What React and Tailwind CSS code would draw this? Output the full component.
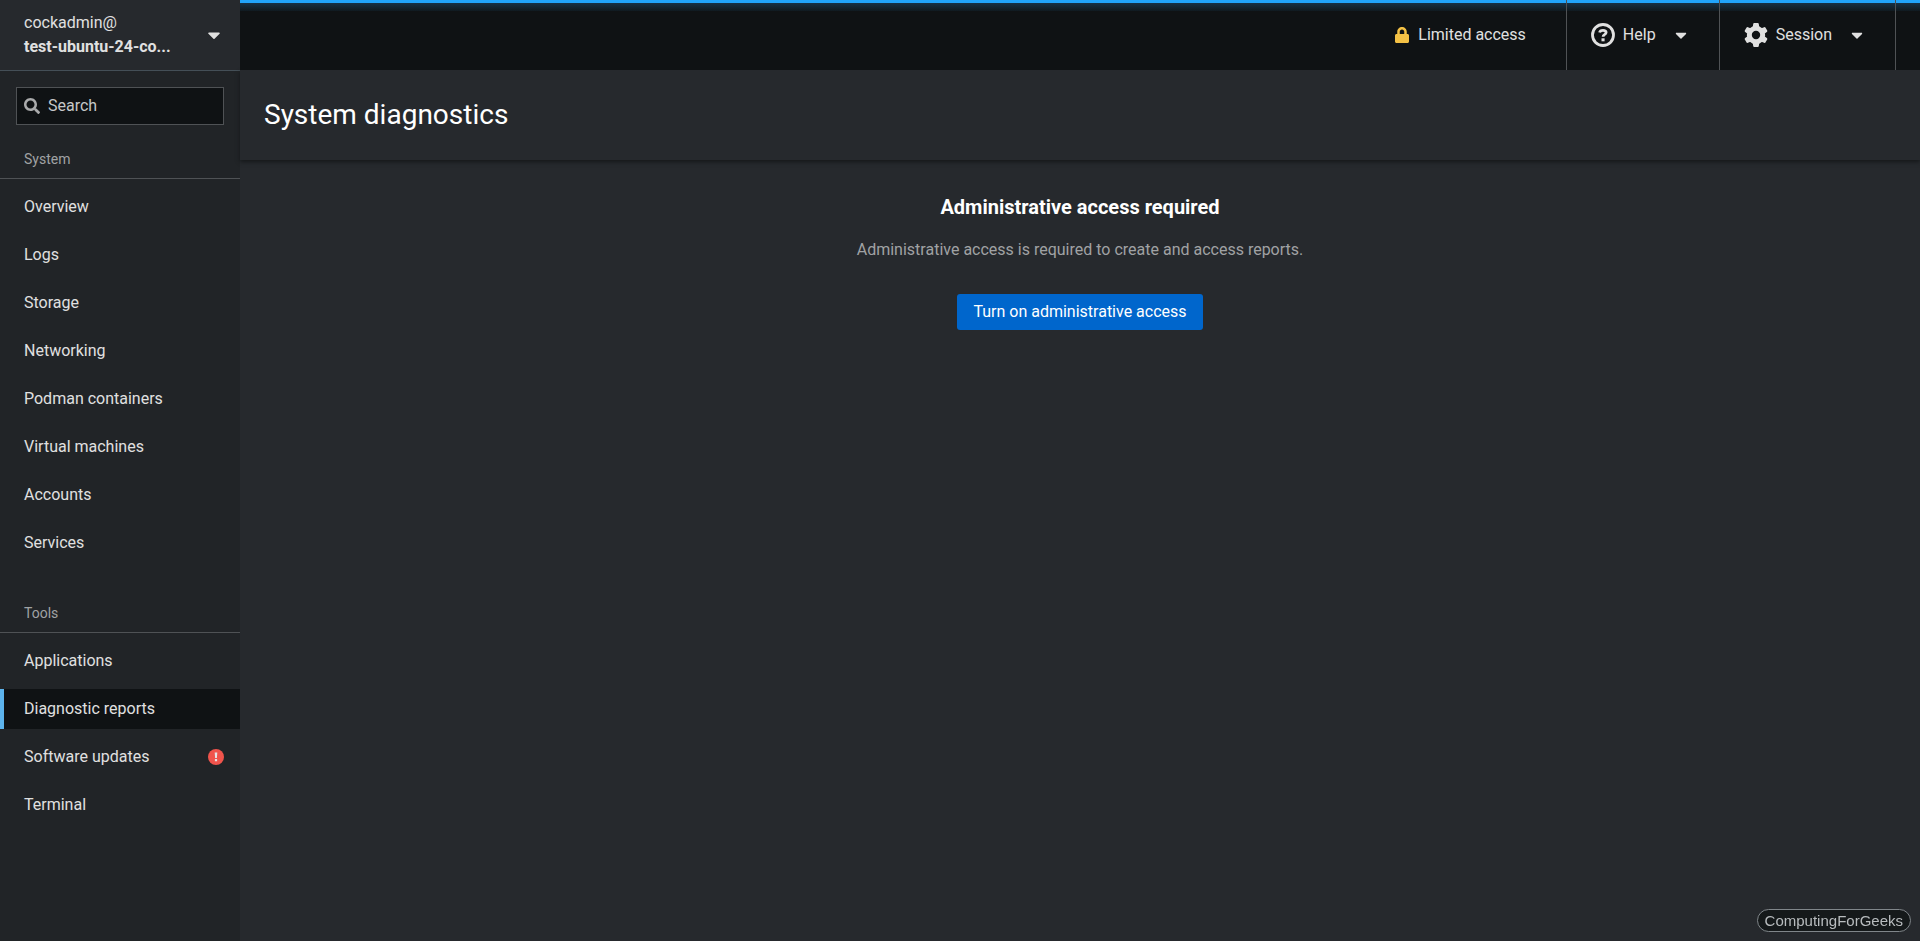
import { FaLock, FaSearch, FaCaretDown } from "react-icons/fa";

const systemItems = ["Overview", "Logs", "Storage", "Networking", "Podman containers", "Virtual machines", "Accounts", "Services"];
const toolItems = ["Applications", "Diagnostic reports", "Software updates", "Terminal"];

function HelpIcon() {
  return (
    <svg viewBox="0 0 24 24" className="size-6 shrink-0" aria-hidden="true" fill="none" stroke="currentColor">
      <circle cx="12" cy="12" r="10.5" strokeWidth="2.8" />
      <path d="M8.6 9.6C8.9 8 10.2 7.3 12 7.3c1.9 0 3.1.8 3.1 2.2 0 1.1-.7 1.6-1.6 2.1-.9.5-1.4.9-1.4 2.1" strokeWidth="2.8" />
      <path d="M10.5 15.3h3.1v3h-3.1z" fill="currentColor" stroke="none" />
    </svg>
  );
}

function GearIcon() {
  return (
    <svg viewBox="0 0 24 24" className="size-6 shrink-0" aria-hidden="true" fill="none" stroke="currentColor">
      <circle cx="12" cy="12" r="6.7" strokeWidth="5" />
      {[0, 60, 120, 180, 240, 300].map((angle) => (
        <path
          key={angle}
          d="M8.7 4.5 9.2 1.1Q9.3.1 10.2.1h3.6q.9 0 1 1L15.3 4.500z"
          fill="currentColor"
          stroke="none"
          transform={`rotate(${angle} 12 12)`}
        />
      ))}
    </svg>
  );
}

function AlertIcon() {
  return (
    <svg viewBox="0 0 16 16" className="size-4 shrink-0" role="img" aria-label="Updates available">
      <circle cx="8" cy="8" r="8" fill="#f0544c" />
      <path d="M6.7 3.6h2.6l-.4 5.3H7.1zM6.9 10h2.2v2.2H6.9z" fill="#e6e4e6" />
    </svg>
  );
}

function NavSection({ title, items, current, alert }) {
  return (
    <section>
      <h2 className="border-b border-[#4f5255] px-6 py-2 text-sm leading-[21px] text-[#a0a2a4]">{title}</h2>
      <ul className="flex flex-col gap-2 pt-2">
        {items.map((item) => (
          <li key={item}>
            <a
              href="#"
              aria-current={item === current ? "page" : undefined}
              className={
                item === current
                  ? "flex h-10 items-center border-l-4 border-[#5cb3ec] bg-[#0f1214] pr-4 pl-5"
                  : "flex h-10 items-center pr-4 pl-6"
              }
            >
              <span className="grow">{item}</span>
              {item === alert && <AlertIcon />}
            </a>
          </li>
        ))}
      </ul>
    </section>
  );
}

export default function App() {
  return (
    <div className="flex min-h-screen bg-[#26292d] font-['Roboto','Liberation_Sans',sans-serif] text-base text-[#e0e0e0]">
      <aside className="flex w-60 shrink-0 flex-col bg-[#212427]">
        <button type="button" className="flex h-[71px] items-center border-b border-[#444f57] bg-[#26292d] pr-4 pl-6 text-left leading-6">
          <span className="min-w-0 grow">
            <span className="block">cockadmin@</span>
            <span className="block font-bold">test-ubuntu-24-co...</span>
          </span>
          <FaCaretDown className="size-5" />
        </button>
        <label className="m-4 flex h-[38px] items-center gap-2 border border-[#4f5255] bg-[#0f1214] px-[7px]">
          <FaSearch className="size-4 shrink-0 text-[#aaabac]" />
          <input type="search" aria-label="Search" placeholder="Search" className="w-full min-w-0 bg-transparent outline-none placeholder:text-[#c6c7c8]" />
        </label>
        <nav className="flex flex-col gap-8">
          <NavSection title="System" items={systemItems} />
          <NavSection title="Tools" items={toolItems} current="Diagnostic reports" alert="Software updates" />
        </nav>
      </aside>
      <div className="flex min-w-0 grow flex-col">
        <header className="relative flex h-[70px] justify-end bg-[#0f1214] pr-6">
          <div className="absolute inset-x-0 top-0 h-[3px] bg-[#21a5fc]" />
          <div className="absolute inset-x-0 top-[3px] h-2 bg-linear-to-b from-[#163247] to-[#101a20]" />
          <button type="button" className="relative flex items-center gap-2 pr-10">
            <FaLock className="size-4 text-[#f4c145]" />
            Limited access
          </button>
          <button type="button" className="relative flex items-center border-l border-[#4f5255] pr-[29px] pl-6">
            <HelpIcon />
            <span className="pl-2">Help</span>
            <FaCaretDown className="ml-4 size-[18px]" />
          </button>
          <button type="button" className="relative flex items-center border-x border-[#4f5255] pr-[29px] pl-6">
            <GearIcon />
            <span className="pl-2">Session</span>
            <FaCaretDown className="ml-4 size-[18px]" />
          </button>
        </header>
        <div className="px-6 py-6 shadow-[0_2px_4px_#15181a]">
          <h1 className="text-[28px] leading-[42px] text-white">System diagnostics</h1>
        </div>
        <main className="flex flex-col items-center px-8 py-8">
          <h2 className="text-xl leading-[30px] font-bold text-white">Administrative access required</h2>
          <p className="pt-4 leading-6 text-[#a0a2a4]">Administrative access is required to create and access reports.</p>
          <button type="button" className="mt-8 h-9 rounded-[3px] bg-[#0066cc] px-4 text-white">Turn on administrative access</button>
        </main>
      </div>
      <div className="fixed right-[9px] bottom-[9px] rounded-full border border-[#80868a] bg-[#15191a] px-[7px] font-['Liberation_Sans',Arial,sans-serif] text-[15px] leading-[21px] text-[#b8bcbe]">
        ComputingForGeeks
      </div>
    </div>
  );
}
